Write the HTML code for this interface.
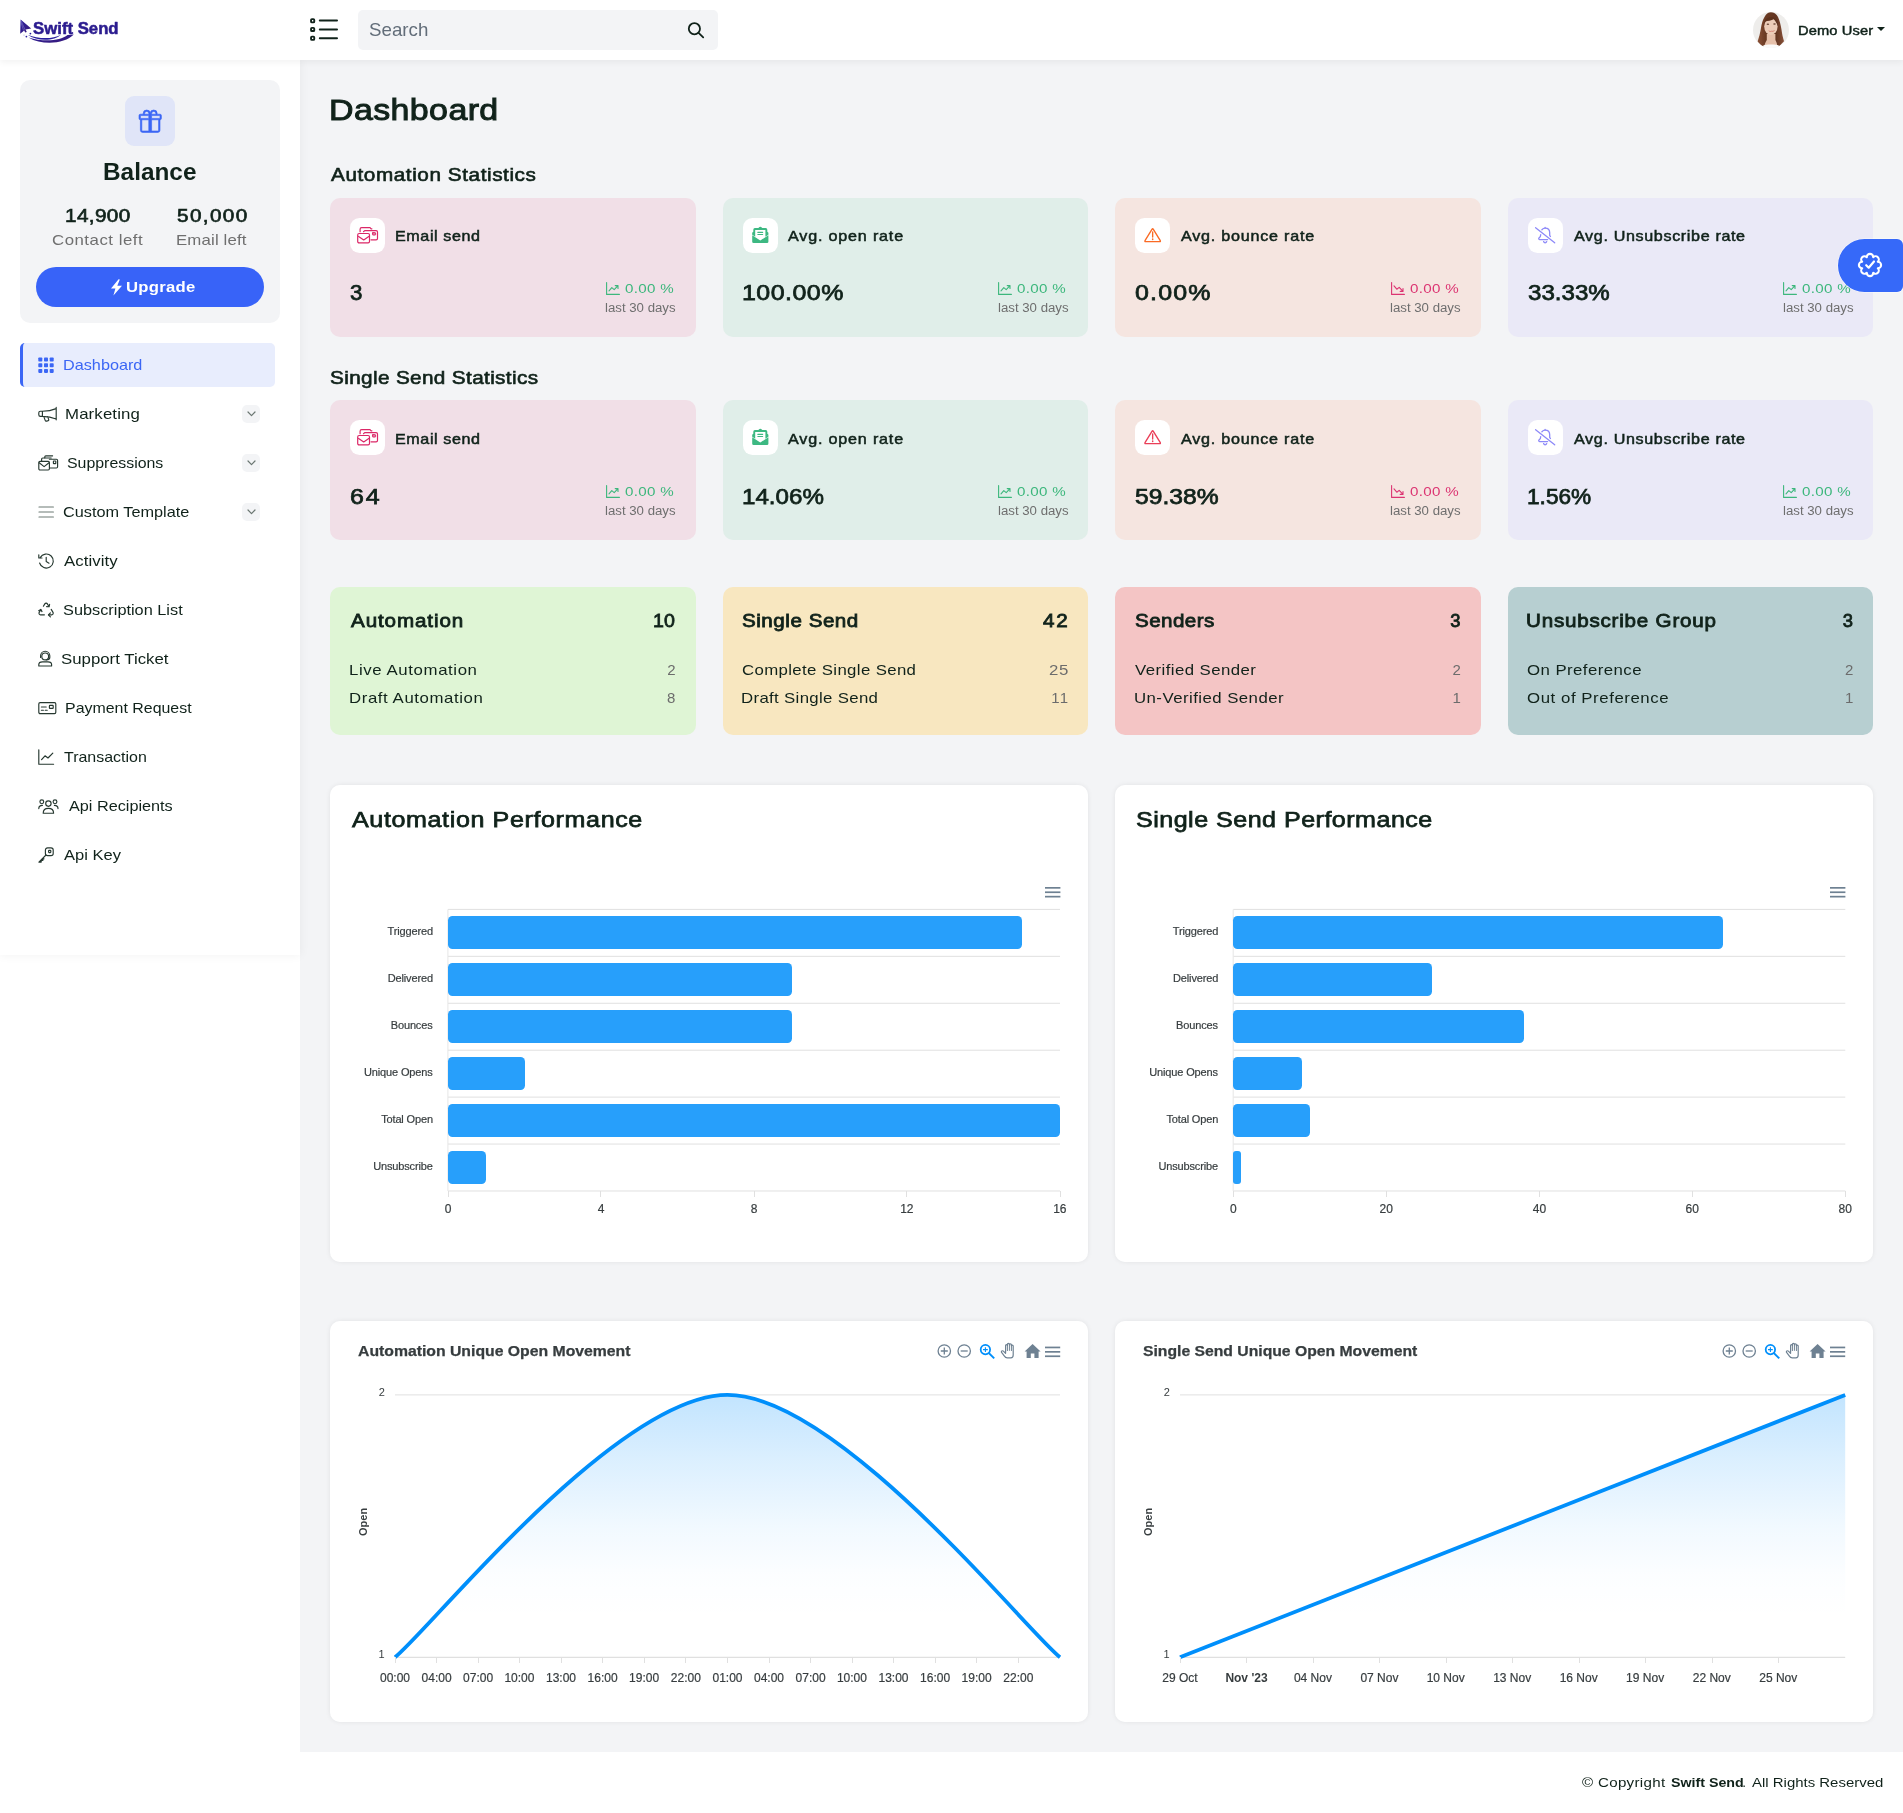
<!DOCTYPE html>
<html lang="en"><head><meta charset="utf-8"><title>Dashboard - Swift Send</title>
<style>
*{box-sizing:border-box;margin:0;padding:0}
html,body{width:1903px;height:1813px;overflow:hidden;background:#fff}
body{position:relative;font-family:"Liberation Sans",sans-serif;color:#10221a}
.t{position:absolute;white-space:nowrap;line-height:1;display:block}
.b{position:absolute}
svg{position:absolute;overflow:visible}
#pg{position:absolute;left:0;top:0;width:1903px;height:1813px;overflow:hidden;transform:translateZ(0)}
</style></head>
<body><div id="pg">
<!-- main background -->
<div class="b" style="left:300px;top:60px;width:1603px;height:1692px;background:rgba(243,244,246,.996);"></div>
<!-- content -->
<span class="t" style="left:328.88px;top:95px;font-size:30.3px;letter-spacing:0.36px;-webkit-text-stroke:1px #10221a;transform:scaleX(1.12);transform-origin:0 0;">Dashboard</span>
<span class="t" style="left:331.31px;top:166px;font-size:18.5px;letter-spacing:0.51px;-webkit-text-stroke:0.62px #10221a;transform:scaleX(1.12);transform-origin:0 0;">Automation Statistics</span>
<span class="t" style="left:329.91px;top:369px;font-size:18.5px;letter-spacing:0.323px;-webkit-text-stroke:0.62px #10221a;transform:scaleX(1.12);transform-origin:0 0;">Single Send Statistics</span>
<div class="b" style="left:330px;top:198px;width:366px;height:139px;background:rgba(241,223,231,.996);border-radius:10px;"></div>
<div class="b" style="left:350px;top:218px;width:35px;height:35px;background:rgba(255,255,255,.996);border-radius:9.5px;"></div>
<svg style="left:349.85px;top:217.7px" width="35" height="35" viewBox="0 0 35 35" fill="none" stroke="#db2767" stroke-width="1.2" stroke-linecap="round" stroke-linejoin="round"><rect x="7.7" y="15.5" width="11.8" height="9.4" rx="1.4"/><path d="M8.6 18.4L13.7 21.9L18.8 18.4"/><path d="M10.1 13.7V11.2C10.1 10.2 10.6 9.7 11.6 9.7H20.2L20.9 10.8H21.9"/><path d="M13.5 13.7L14.7 12.6H26.1C27 12.6 27.5 13.1 27.5 14.1V20.4C27.5 21.3 27 21.8 26.1 21.8H21"/><rect x="22.5" y="14.7" width="3.1" height="2.3" rx=".4" fill="#db2767" fill-opacity=".55" stroke-width="1"/></svg>
<span class="t" style="left:394.56px;top:229px;font-size:14.4px;letter-spacing:0.518px;-webkit-text-stroke:0.5px #10221a;transform:scaleX(1.12);transform-origin:0 0;">Email send</span>
<span class="t" style="left:349.93px;top:282px;font-size:22.3px;-webkit-text-stroke:0.75px #10221a;">3</span>
<svg style="left:605.5px;top:281.5px" width="14" height="13" viewBox="0 0 14 13" fill="none" stroke="#3cb77c" stroke-width="1.1" stroke-linecap="round" stroke-linejoin="round"><path d="M.6 .6V12.4H13.4"/><path d="M3 8.8L5.8 5.6L8.2 7.6L11.8 3.8M9.2 3.6H12V6.4"/></svg>
<span class="t" style="left:624.61px;top:282px;font-size:13.5px;letter-spacing:0.278px;color:#3cb77c;transform:scaleX(1.12);transform-origin:0 0;">0.00 %</span>
<span class="t" style="left:604.91px;top:302px;font-size:12px;color:#6e6e6e;transform:scaleX(1.102);transform-origin:0 0;">last 30 days</span>
<div class="b" style="left:723px;top:198px;width:365px;height:139px;background:rgba(224,238,233,.996);border-radius:10px;"></div>
<div class="b" style="left:743px;top:218px;width:35px;height:35px;background:rgba(255,255,255,.996);border-radius:9.5px;"></div>
<svg style="left:742.85px;top:217.7px" width="35" height="35" viewBox="-9.1 -8.7 35 35"><path d="M1.2 3Q1.2 1.4 2.8 1.4H6.2L7.4 .4Q8.2 -.2 9 .4L10.2 1.4H13.6Q15.2 1.4 15.2 3V5L16.1 5.7Q16.5 6.1 16.3 6.9V8L13.3 10V3.4H3.1V10L.1 8V6.9Q-.1 6.1 .3 5.7L1.2 5Z" fill="#3db882"/><rect x="5.2" y="5.1" width="5.9" height="1.1" rx=".5" fill="#3db882"/><rect x="5.2" y="7.2" width="5.9" height="1.1" rx=".5" fill="#3db882"/><path d="M.1 8.6L8.2 13.8L16.3 8.6V15Q16.3 16.4 14.9 16.4H1.5Q.1 16.4 .1 15Z" fill="#3db882"/></svg>
<span class="t" style="left:788.45px;top:229px;font-size:14.4px;letter-spacing:0.726px;-webkit-text-stroke:0.5px #10221a;transform:scaleX(1.12);transform-origin:0 0;">Avg. open rate</span>
<span class="t" style="left:741.52px;top:282px;font-size:22.3px;letter-spacing:0.424px;-webkit-text-stroke:0.75px #10221a;transform:scaleX(1.12);transform-origin:0 0;">100.00%</span>
<svg style="left:998.1px;top:281.5px" width="14" height="13" viewBox="0 0 14 13" fill="none" stroke="#3cb77c" stroke-width="1.1" stroke-linecap="round" stroke-linejoin="round"><path d="M.6 .6V12.4H13.4"/><path d="M3 8.8L5.8 5.6L8.2 7.6L11.8 3.8M9.2 3.6H12V6.4"/></svg>
<span class="t" style="left:1017.21px;top:282px;font-size:13.5px;letter-spacing:0.278px;color:#3cb77c;transform:scaleX(1.12);transform-origin:0 0;">0.00 %</span>
<span class="t" style="left:997.51px;top:302px;font-size:12px;color:#6e6e6e;transform:scaleX(1.102);transform-origin:0 0;">last 30 days</span>
<div class="b" style="left:1115px;top:198px;width:366px;height:139px;background:rgba(245,229,224,.996);border-radius:10px;"></div>
<div class="b" style="left:1135px;top:218px;width:35px;height:35px;background:rgba(255,255,255,.996);border-radius:9.5px;"></div>
<svg style="left:1134.85px;top:217.7px" width="35" height="35" viewBox="0 0 35 35" fill="none" stroke="#fa6a24" stroke-width="1.35" stroke-linecap="round" stroke-linejoin="round"><path d="M17.1 11.2Q17.66 10.3 18.2 11.2L25.3 22.7Q25.7 23.6 24.8 23.6H10.5Q9.6 23.6 10 22.7Z"/><path d="M17.66 14V19.1"/><path d="M17.66 20.9V21.5" stroke-width="1.5"/></svg>
<span class="t" style="left:1181.05px;top:229px;font-size:14.4px;letter-spacing:0.687px;-webkit-text-stroke:0.5px #10221a;transform:scaleX(1.12);transform-origin:0 0;">Avg. bounce rate</span>
<span class="t" style="left:1135.04px;top:282px;font-size:22.3px;letter-spacing:1.051px;-webkit-text-stroke:0.75px #10221a;transform:scaleX(1.12);transform-origin:0 0;">0.00%</span>
<svg style="left:1390.7px;top:281.5px" width="14" height="13" viewBox="0 0 14 13" fill="none" stroke="#dc3572" stroke-width="1.1" stroke-linecap="round" stroke-linejoin="round"><path d="M.6 .6V12.4H13.4"/><path d="M3 3.8L5.8 7.2L8.2 5.4L11.8 9.2M9.2 9.4H12V6.6"/></svg>
<span class="t" style="left:1409.81px;top:282px;font-size:13.5px;letter-spacing:0.278px;color:#dc3572;transform:scaleX(1.12);transform-origin:0 0;">0.00 %</span>
<span class="t" style="left:1390.11px;top:302px;font-size:12px;color:#6e6e6e;transform:scaleX(1.102);transform-origin:0 0;">last 30 days</span>
<div class="b" style="left:1508px;top:198px;width:365px;height:139px;background:rgba(234,233,247,.996);border-radius:10px;"></div>
<div class="b" style="left:1528px;top:218px;width:35px;height:35px;background:rgba(255,255,255,.996);border-radius:9.5px;"></div>
<svg style="left:1527.85px;top:217.7px" width="35" height="35" viewBox="0 0 35 35" fill="none" stroke="#8d89f8" stroke-width="1.3" stroke-linecap="round" stroke-linejoin="round"><path d="M7.6 9.7L26.7 24.8"/><path d="M13.9 11.7C14.8 10.7 15.9 10.2 17.1 10.2C19.8 10.2 21.7 12 21.7 14.8V17.4L22.4 18.5"/><path d="M17.1 10.1V9.5"/><path d="M12.7 16.7C12.7 18.3 12 19.2 11.2 19.8C10.4 20.5 10.6 21.6 11.6 21.6H19.6"/><path d="M15.6 23.6C15.9 24.4 16.5 24.8 17.1 24.8C17.8 24.8 18.4 24.4 18.7 23.6"/></svg>
<span class="t" style="left:1573.65px;top:229px;font-size:14.4px;letter-spacing:0.572px;-webkit-text-stroke:0.5px #10221a;transform:scaleX(1.12);transform-origin:0 0;">Avg. Unsubscribe rate</span>
<span class="t" style="left:1527.69px;top:282px;font-size:22.3px;-webkit-text-stroke:0.75px #10221a;transform:scaleX(1.0811);transform-origin:0 0;">33.33%</span>
<svg style="left:1783.3px;top:281.5px" width="14" height="13" viewBox="0 0 14 13" fill="none" stroke="#3cb77c" stroke-width="1.1" stroke-linecap="round" stroke-linejoin="round"><path d="M.6 .6V12.4H13.4"/><path d="M3 8.8L5.8 5.6L8.2 7.6L11.8 3.8M9.2 3.6H12V6.4"/></svg>
<span class="t" style="left:1802.41px;top:282px;font-size:13.5px;letter-spacing:0.278px;color:#3cb77c;transform:scaleX(1.12);transform-origin:0 0;">0.00 %</span>
<span class="t" style="left:1782.71px;top:302px;font-size:12px;color:#6e6e6e;transform:scaleX(1.102);transform-origin:0 0;">last 30 days</span>
<div class="b" style="left:330px;top:400px;width:366px;height:140px;background:rgba(241,223,231,.996);border-radius:10px;"></div>
<div class="b" style="left:350px;top:420px;width:35px;height:35px;background:rgba(255,255,255,.996);border-radius:9.5px;"></div>
<svg style="left:349.85px;top:419.7px" width="35" height="35" viewBox="0 0 35 35" fill="none" stroke="#db2767" stroke-width="1.2" stroke-linecap="round" stroke-linejoin="round"><rect x="7.7" y="15.5" width="11.8" height="9.4" rx="1.4"/><path d="M8.6 18.4L13.7 21.9L18.8 18.4"/><path d="M10.1 13.7V11.2C10.1 10.2 10.6 9.7 11.6 9.7H20.2L20.9 10.8H21.9"/><path d="M13.5 13.7L14.7 12.6H26.1C27 12.6 27.5 13.1 27.5 14.1V20.4C27.5 21.3 27 21.8 26.1 21.8H21"/><rect x="22.5" y="14.7" width="3.1" height="2.3" rx=".4" fill="#db2767" fill-opacity=".55" stroke-width="1"/></svg>
<span class="t" style="left:394.56px;top:432px;font-size:14.4px;letter-spacing:0.518px;-webkit-text-stroke:0.5px #10221a;transform:scaleX(1.12);transform-origin:0 0;">Email send</span>
<span class="t" style="left:349.55px;top:486px;font-size:22.3px;letter-spacing:1.677px;-webkit-text-stroke:0.75px #10221a;transform:scaleX(1.12);transform-origin:0 0;">64</span>
<svg style="left:605.5px;top:484.5px" width="14" height="13" viewBox="0 0 14 13" fill="none" stroke="#3cb77c" stroke-width="1.1" stroke-linecap="round" stroke-linejoin="round"><path d="M.6 .6V12.4H13.4"/><path d="M3 8.8L5.8 5.6L8.2 7.6L11.8 3.8M9.2 3.6H12V6.4"/></svg>
<span class="t" style="left:624.61px;top:485px;font-size:13.5px;letter-spacing:0.278px;color:#3cb77c;transform:scaleX(1.12);transform-origin:0 0;">0.00 %</span>
<span class="t" style="left:604.91px;top:505px;font-size:12px;color:#6e6e6e;transform:scaleX(1.102);transform-origin:0 0;">last 30 days</span>
<div class="b" style="left:723px;top:400px;width:365px;height:140px;background:rgba(224,238,233,.996);border-radius:10px;"></div>
<div class="b" style="left:743px;top:420px;width:35px;height:35px;background:rgba(255,255,255,.996);border-radius:9.5px;"></div>
<svg style="left:742.85px;top:419.7px" width="35" height="35" viewBox="-9.1 -8.7 35 35"><path d="M1.2 3Q1.2 1.4 2.8 1.4H6.2L7.4 .4Q8.2 -.2 9 .4L10.2 1.4H13.6Q15.2 1.4 15.2 3V5L16.1 5.7Q16.5 6.1 16.3 6.9V8L13.3 10V3.4H3.1V10L.1 8V6.9Q-.1 6.1 .3 5.7L1.2 5Z" fill="#3db882"/><rect x="5.2" y="5.1" width="5.9" height="1.1" rx=".5" fill="#3db882"/><rect x="5.2" y="7.2" width="5.9" height="1.1" rx=".5" fill="#3db882"/><path d="M.1 8.6L8.2 13.8L16.3 8.6V15Q16.3 16.4 14.9 16.4H1.5Q.1 16.4 .1 15Z" fill="#3db882"/></svg>
<span class="t" style="left:788.45px;top:432px;font-size:14.4px;letter-spacing:0.726px;-webkit-text-stroke:0.5px #10221a;transform:scaleX(1.12);transform-origin:0 0;">Avg. open rate</span>
<span class="t" style="left:741.57px;top:486px;font-size:22.3px;-webkit-text-stroke:0.75px #10221a;transform:scaleX(1.0827);transform-origin:0 0;">14.06%</span>
<svg style="left:998.1px;top:484.5px" width="14" height="13" viewBox="0 0 14 13" fill="none" stroke="#3cb77c" stroke-width="1.1" stroke-linecap="round" stroke-linejoin="round"><path d="M.6 .6V12.4H13.4"/><path d="M3 8.8L5.8 5.6L8.2 7.6L11.8 3.8M9.2 3.6H12V6.4"/></svg>
<span class="t" style="left:1017.21px;top:485px;font-size:13.5px;letter-spacing:0.278px;color:#3cb77c;transform:scaleX(1.12);transform-origin:0 0;">0.00 %</span>
<span class="t" style="left:997.51px;top:505px;font-size:12px;color:#6e6e6e;transform:scaleX(1.102);transform-origin:0 0;">last 30 days</span>
<div class="b" style="left:1115px;top:400px;width:366px;height:140px;background:rgba(245,229,224,.996);border-radius:10px;"></div>
<div class="b" style="left:1135px;top:420px;width:35px;height:35px;background:rgba(255,255,255,.996);border-radius:9.5px;"></div>
<svg style="left:1134.85px;top:419.7px" width="35" height="35" viewBox="0 0 35 35" fill="none" stroke="#ea3f58" stroke-width="1.35" stroke-linecap="round" stroke-linejoin="round"><path d="M17.1 11.2Q17.66 10.3 18.2 11.2L25.3 22.7Q25.7 23.6 24.8 23.6H10.5Q9.6 23.6 10 22.7Z"/><path d="M17.66 14V19.1"/><path d="M17.66 20.9V21.5" stroke-width="1.5"/></svg>
<span class="t" style="left:1181.05px;top:432px;font-size:14.4px;letter-spacing:0.687px;-webkit-text-stroke:0.5px #10221a;transform:scaleX(1.12);transform-origin:0 0;">Avg. bounce rate</span>
<span class="t" style="left:1135.03px;top:486px;font-size:22.3px;-webkit-text-stroke:0.75px #10221a;transform:scaleX(1.1045);transform-origin:0 0;">59.38%</span>
<svg style="left:1390.7px;top:484.5px" width="14" height="13" viewBox="0 0 14 13" fill="none" stroke="#dc3572" stroke-width="1.1" stroke-linecap="round" stroke-linejoin="round"><path d="M.6 .6V12.4H13.4"/><path d="M3 3.8L5.8 7.2L8.2 5.4L11.8 9.2M9.2 9.4H12V6.6"/></svg>
<span class="t" style="left:1409.81px;top:485px;font-size:13.5px;letter-spacing:0.278px;color:#dc3572;transform:scaleX(1.12);transform-origin:0 0;">0.00 %</span>
<span class="t" style="left:1390.11px;top:505px;font-size:12px;color:#6e6e6e;transform:scaleX(1.102);transform-origin:0 0;">last 30 days</span>
<div class="b" style="left:1508px;top:400px;width:365px;height:140px;background:rgba(234,233,247,.996);border-radius:10px;"></div>
<div class="b" style="left:1528px;top:420px;width:35px;height:35px;background:rgba(255,255,255,.996);border-radius:9.5px;"></div>
<svg style="left:1527.85px;top:419.7px" width="35" height="35" viewBox="0 0 35 35" fill="none" stroke="#8d89f8" stroke-width="1.3" stroke-linecap="round" stroke-linejoin="round"><path d="M7.6 9.7L26.7 24.8"/><path d="M13.9 11.7C14.8 10.7 15.9 10.2 17.1 10.2C19.8 10.2 21.7 12 21.7 14.8V17.4L22.4 18.5"/><path d="M17.1 10.1V9.5"/><path d="M12.7 16.7C12.7 18.3 12 19.2 11.2 19.8C10.4 20.5 10.6 21.6 11.6 21.6H19.6"/><path d="M15.6 23.6C15.9 24.4 16.5 24.8 17.1 24.8C17.8 24.8 18.4 24.4 18.7 23.6"/></svg>
<span class="t" style="left:1573.65px;top:432px;font-size:14.4px;letter-spacing:0.572px;-webkit-text-stroke:0.5px #10221a;transform:scaleX(1.12);transform-origin:0 0;">Avg. Unsubscribe rate</span>
<span class="t" style="left:1526.85px;top:486px;font-size:22.3px;-webkit-text-stroke:0.75px #10221a;transform:scaleX(1.0165);transform-origin:0 0;">1.56%</span>
<svg style="left:1783.3px;top:484.5px" width="14" height="13" viewBox="0 0 14 13" fill="none" stroke="#3cb77c" stroke-width="1.1" stroke-linecap="round" stroke-linejoin="round"><path d="M.6 .6V12.4H13.4"/><path d="M3 8.8L5.8 5.6L8.2 7.6L11.8 3.8M9.2 3.6H12V6.4"/></svg>
<span class="t" style="left:1802.41px;top:485px;font-size:13.5px;letter-spacing:0.278px;color:#3cb77c;transform:scaleX(1.12);transform-origin:0 0;">0.00 %</span>
<span class="t" style="left:1782.71px;top:505px;font-size:12px;color:#6e6e6e;transform:scaleX(1.102);transform-origin:0 0;">last 30 days</span>
<div class="b" style="left:330px;top:587px;width:366px;height:148px;background:rgba(223,245,213,.996);border-radius:10px;"></div>
<span class="t" style="left:351.41px;top:612px;font-size:18.4px;letter-spacing:0.797px;-webkit-text-stroke:0.8px #10221a;transform:scaleX(1.12);transform-origin:0 0;">Automation</span>
<span class="t" style="left:653.33px;top:612px;font-size:18.4px;-webkit-text-stroke:0.8px #10221a;transform:scaleX(1.0655);transform-origin:0 0;">10</span>
<span class="t" style="left:349.12px;top:662px;font-size:15px;letter-spacing:0.537px;transform:scaleX(1.12);transform-origin:0 0;">Live Automation</span>
<span class="t" style="left:667.21px;top:662px;font-size:15px;color:#6c6c6c;">2</span>
<span class="t" style="left:349.12px;top:690px;font-size:15px;letter-spacing:0.514px;transform:scaleX(1.12);transform-origin:0 0;">Draft Automation</span>
<span class="t" style="left:667.11px;top:690px;font-size:15px;color:#6c6c6c;">8</span>
<div class="b" style="left:723px;top:587px;width:365px;height:148px;background:rgba(248,231,192,.996);border-radius:10px;"></div>
<span class="t" style="left:742.11px;top:612px;font-size:18.4px;letter-spacing:0.466px;-webkit-text-stroke:0.8px #10221a;transform:scaleX(1.12);transform-origin:0 0;">Single Send</span>
<span class="t" style="left:1043.38px;top:612px;font-size:18.4px;letter-spacing:1.509px;-webkit-text-stroke:0.8px #10221a;transform:scaleX(1.12);transform-origin:0 0;">42</span>
<span class="t" style="left:741.95px;top:662px;font-size:15px;letter-spacing:0.318px;transform:scaleX(1.12);transform-origin:0 0;">Complete Single Send</span>
<span class="t" style="left:1048.76px;top:662px;font-size:15px;letter-spacing:0.592px;color:#6c6c6c;transform:scaleX(1.12);transform-origin:0 0;">25</span>
<span class="t" style="left:741.42px;top:690px;font-size:15px;letter-spacing:0.295px;transform:scaleX(1.12);transform-origin:0 0;">Draft Single Send</span>
<span class="t" style="left:1051.16px;top:690px;font-size:15px;letter-spacing:1.4px;color:#6c6c6c;">11</span>
<div class="b" style="left:1115px;top:587px;width:366px;height:148px;background:rgba(244,197,197,.996);border-radius:10px;"></div>
<span class="t" style="left:1134.51px;top:612px;font-size:18.4px;letter-spacing:0.376px;-webkit-text-stroke:0.8px #10221a;transform:scaleX(1.12);transform-origin:0 0;">Senders</span>
<span class="t" style="left:1450.18px;top:612px;font-size:18.4px;-webkit-text-stroke:0.8px #10221a;">3</span>
<span class="t" style="left:1135.13px;top:662px;font-size:15px;letter-spacing:0.381px;transform:scaleX(1.12);transform-origin:0 0;">Verified Sender</span>
<span class="t" style="left:1452.41px;top:662px;font-size:15px;color:#6c6c6c;">2</span>
<span class="t" style="left:1133.9px;top:690px;font-size:15px;letter-spacing:0.4px;transform:scaleX(1.12);transform-origin:0 0;">Un-Verified Sender</span>
<span class="t" style="left:1452.39px;top:690px;font-size:15px;color:#6c6c6c;">1</span>
<div class="b" style="left:1508px;top:587px;width:365px;height:148px;background:rgba(183,207,209,.996);border-radius:10px;"></div>
<span class="t" style="left:1526.26px;top:612px;font-size:18.4px;letter-spacing:0.698px;-webkit-text-stroke:0.8px #10221a;transform:scaleX(1.12);transform-origin:0 0;">Unsubscribe Group</span>
<span class="t" style="left:1842.78px;top:612px;font-size:18.4px;-webkit-text-stroke:0.8px #10221a;">3</span>
<span class="t" style="left:1526.6px;top:662px;font-size:15px;letter-spacing:0.393px;transform:scaleX(1.12);transform-origin:0 0;">On Preference</span>
<span class="t" style="left:1845.01px;top:662px;font-size:15px;color:#6c6c6c;">2</span>
<span class="t" style="left:1526.6px;top:690px;font-size:15px;letter-spacing:0.499px;transform:scaleX(1.12);transform-origin:0 0;">Out of Preference</span>
<span class="t" style="left:1844.99px;top:690px;font-size:15px;color:#6c6c6c;">1</span>
<div class="b" style="left:330px;top:785px;width:758px;height:477px;background:rgba(255,255,255,.996);border-radius:10px;box-shadow:0 0 5px rgba(0,0,0,.075);"></div>
<span class="t" style="left:351.87px;top:809px;font-size:22.4px;letter-spacing:0.549px;-webkit-text-stroke:0.75px #10221a;transform:scaleX(1.12);transform-origin:0 0;">Automation Performance</span>
<svg style="left:0;top:0" width="1903" height="1813" viewBox="0 0 1903 1813" fill="none"><path d="M448 909.4H1060M448 956.33H1060M448 1003.26H1060M448 1050.19H1060M448 1097.12H1060M448 1144.05H1060M448 1190.98H1060" stroke="#e0e0e0" stroke-width="1"/><path d="M447.9 909.4V1190.98" stroke="#e6e6e6" stroke-width="1"/></svg>
<div class="b" style="left:448px;top:916.439px;width:573.75px;height:32.851px;background:rgba(38,159,251,.996);border-radius:4.5px;"></div>
<span class="t" style="left:387.54px;top:926px;font-size:11px;letter-spacing:-0.15px;color:#373d3f;-webkit-text-stroke:0.2px #373d3f;">Triggered</span>
<div class="b" style="left:448px;top:963.369px;width:344.25px;height:32.851px;background:rgba(38,159,251,.996);border-radius:4.5px;"></div>
<span class="t" style="left:387.74px;top:973px;font-size:11px;letter-spacing:-0.15px;color:#373d3f;-webkit-text-stroke:0.2px #373d3f;">Delivered</span>
<div class="b" style="left:448px;top:1010.3px;width:344.25px;height:32.851px;background:rgba(38,159,251,.996);border-radius:4.5px;"></div>
<span class="t" style="left:390.79px;top:1020px;font-size:11px;letter-spacing:-0.15px;color:#373d3f;-webkit-text-stroke:0.2px #373d3f;">Bounces</span>
<div class="b" style="left:448px;top:1057.23px;width:76.5px;height:32.851px;background:rgba(38,159,251,.996);border-radius:4.5px;"></div>
<span class="t" style="left:364.02px;top:1067px;font-size:11px;letter-spacing:-0.15px;color:#373d3f;-webkit-text-stroke:0.2px #373d3f;">Unique Opens</span>
<div class="b" style="left:448px;top:1104.16px;width:612px;height:32.851px;background:rgba(38,159,251,.996);border-radius:4.5px;"></div>
<span class="t" style="left:381.16px;top:1114px;font-size:11px;letter-spacing:-0.15px;color:#373d3f;-webkit-text-stroke:0.2px #373d3f;">Total Open</span>
<div class="b" style="left:448px;top:1151.09px;width:38.25px;height:32.851px;background:rgba(38,159,251,.996);border-radius:4.5px;"></div>
<span class="t" style="left:373.15px;top:1161px;font-size:11px;letter-spacing:-0.15px;color:#373d3f;-webkit-text-stroke:0.2px #373d3f;">Unsubscribe</span>
<div class="b" style="left:448px;top:1191px;width:1px;height:6px;background:rgba(224,224,224,.996);"></div>
<span class="t" style="left:444.66px;top:1203px;font-size:12px;color:#373d3f;-webkit-text-stroke:0.2px #373d3f;">0</span>
<div class="b" style="left:600px;top:1191px;width:1px;height:6px;background:rgba(224,224,224,.996);"></div>
<span class="t" style="left:597.7px;top:1203px;font-size:12px;color:#373d3f;-webkit-text-stroke:0.2px #373d3f;">4</span>
<div class="b" style="left:754px;top:1191px;width:1px;height:6px;background:rgba(224,224,224,.996);"></div>
<span class="t" style="left:750.66px;top:1203px;font-size:12px;color:#373d3f;-webkit-text-stroke:0.2px #373d3f;">8</span>
<div class="b" style="left:906px;top:1191px;width:1px;height:6px;background:rgba(224,224,224,.996);"></div>
<span class="t" style="left:900.17px;top:1203px;font-size:12px;color:#373d3f;-webkit-text-stroke:0.2px #373d3f;">12</span>
<div class="b" style="left:1060px;top:1191px;width:1px;height:6px;background:rgba(224,224,224,.996);"></div>
<span class="t" style="left:1053.13px;top:1203px;font-size:12px;color:#373d3f;-webkit-text-stroke:0.2px #373d3f;">16</span>
<svg style="left:1044.7px;top:886.8px" width="16" height="11" viewBox="0 0 16 11" fill="#6e8192"><rect x="0" y="0" width="15.4" height="1.7"/><rect x="0" y="4.4" width="15.4" height="1.7"/><rect x="0" y="8.8" width="15.4" height="1.7"/></svg>
<div class="b" style="left:1115px;top:785px;width:758px;height:477px;background:rgba(255,255,255,.996);border-radius:10px;box-shadow:0 0 5px rgba(0,0,0,.075);"></div>
<span class="t" style="left:1136.08px;top:809px;font-size:22.4px;letter-spacing:0.427px;-webkit-text-stroke:0.75px #10221a;transform:scaleX(1.12);transform-origin:0 0;">Single Send Performance</span>
<svg style="left:0;top:0" width="1903" height="1813" viewBox="0 0 1903 1813" fill="none"><path d="M1233.3 909.4H1845.3M1233.3 956.33H1845.3M1233.3 1003.26H1845.3M1233.3 1050.19H1845.3M1233.3 1097.12H1845.3M1233.3 1144.05H1845.3M1233.3 1190.98H1845.3" stroke="#e0e0e0" stroke-width="1"/><path d="M1233.2 909.4V1190.98" stroke="#e6e6e6" stroke-width="1"/></svg>
<div class="b" style="left:1233.3px;top:916.439px;width:489.6px;height:32.851px;background:rgba(38,159,251,.996);border-radius:4.5px;"></div>
<span class="t" style="left:1172.84px;top:926px;font-size:11px;letter-spacing:-0.15px;color:#373d3f;-webkit-text-stroke:0.2px #373d3f;">Triggered</span>
<div class="b" style="left:1233.3px;top:963.369px;width:198.9px;height:32.851px;background:rgba(38,159,251,.996);border-radius:4.5px;"></div>
<span class="t" style="left:1173.04px;top:973px;font-size:11px;letter-spacing:-0.15px;color:#373d3f;-webkit-text-stroke:0.2px #373d3f;">Delivered</span>
<div class="b" style="left:1233.3px;top:1010.3px;width:290.7px;height:32.851px;background:rgba(38,159,251,.996);border-radius:4.5px;"></div>
<span class="t" style="left:1176.09px;top:1020px;font-size:11px;letter-spacing:-0.15px;color:#373d3f;-webkit-text-stroke:0.2px #373d3f;">Bounces</span>
<div class="b" style="left:1233.3px;top:1057.23px;width:68.85px;height:32.851px;background:rgba(38,159,251,.996);border-radius:4.5px;"></div>
<span class="t" style="left:1149.32px;top:1067px;font-size:11px;letter-spacing:-0.15px;color:#373d3f;-webkit-text-stroke:0.2px #373d3f;">Unique Opens</span>
<div class="b" style="left:1233.3px;top:1104.16px;width:76.5px;height:32.851px;background:rgba(38,159,251,.996);border-radius:4.5px;"></div>
<span class="t" style="left:1166.46px;top:1114px;font-size:11px;letter-spacing:-0.15px;color:#373d3f;-webkit-text-stroke:0.2px #373d3f;">Total Open</span>
<div class="b" style="left:1233.3px;top:1151.09px;width:7.65px;height:32.851px;background:rgba(38,159,251,.996);border-radius:3px;"></div>
<span class="t" style="left:1158.45px;top:1161px;font-size:11px;letter-spacing:-0.15px;color:#373d3f;-webkit-text-stroke:0.2px #373d3f;">Unsubscribe</span>
<div class="b" style="left:1233px;top:1191px;width:1px;height:6px;background:rgba(224,224,224,.996);"></div>
<span class="t" style="left:1229.96px;top:1203px;font-size:12px;color:#373d3f;-webkit-text-stroke:0.2px #373d3f;">0</span>
<div class="b" style="left:1386px;top:1191px;width:1px;height:6px;background:rgba(224,224,224,.996);"></div>
<span class="t" style="left:1379.56px;top:1203px;font-size:12px;color:#373d3f;-webkit-text-stroke:0.2px #373d3f;">20</span>
<div class="b" style="left:1539px;top:1191px;width:1px;height:6px;background:rgba(224,224,224,.996);"></div>
<span class="t" style="left:1532.72px;top:1203px;font-size:12px;color:#373d3f;-webkit-text-stroke:0.2px #373d3f;">40</span>
<div class="b" style="left:1692px;top:1191px;width:1px;height:6px;background:rgba(224,224,224,.996);"></div>
<span class="t" style="left:1685.56px;top:1203px;font-size:12px;color:#373d3f;-webkit-text-stroke:0.2px #373d3f;">60</span>
<div class="b" style="left:1845px;top:1191px;width:1px;height:6px;background:rgba(224,224,224,.996);"></div>
<span class="t" style="left:1838.6px;top:1203px;font-size:12px;color:#373d3f;-webkit-text-stroke:0.2px #373d3f;">80</span>
<svg style="left:1830px;top:886.8px" width="16" height="11" viewBox="0 0 16 11" fill="#6e8192"><rect x="0" y="0" width="15.4" height="1.7"/><rect x="0" y="4.4" width="15.4" height="1.7"/><rect x="0" y="8.8" width="15.4" height="1.7"/></svg>
<div class="b" style="left:330px;top:1321px;width:758px;height:401px;background:rgba(255,255,255,.996);border-radius:10px;box-shadow:0 0 5px rgba(0,0,0,.075);"></div>
<span class="t" style="left:357.85px;top:1344px;font-size:14px;font-weight:700;color:#373d3f;-webkit-text-stroke:0.25px #373d3f;transform:scaleX(1.1265);transform-origin:0 0;">Automation Unique Open Movement</span>
<svg style="left:935px;top:1340px" width="130" height="24" viewBox="935 1340 130 24"><g fill="none" stroke="#6e8192" stroke-width="1.3"><circle cx="944.3" cy="1351" r="6.2"/><path d="M940.8 1351H947.8M944.3 1347.5V1354.5"/><circle cx="964.2" cy="1351" r="6.2"/><path d="M960.7 1351H967.7"/></g><g fill="none" stroke="#008ffb"><circle cx="985.4" cy="1349.6" r="4.7" stroke-width="1.8"/><path d="M988.9 1353.1L994.2 1358.4" stroke-width="2"/><path d="M983 1349.6H987.8M985.4 1347.2V1352" stroke-width="1.1"/></g><g fill="none" stroke="#6e8192" stroke-width="1.2" stroke-linejoin="round" stroke-linecap="round"><path d="M1005.6 1352.4V1345.6C1005.6 1344.4 1007.4 1344.4 1007.4 1345.6V1344.2C1007.4 1343 1009.4 1343 1009.4 1344.2V1344.8C1009.4 1343.6 1011.4 1343.6 1011.4 1344.8V1345.8C1011.4 1344.8 1013.2 1344.8 1013.2 1346V1355C1013.2 1357 1012.2 1357.8 1010.8 1357.8H1007.2C1005.8 1357.8 1005 1357 1004.2 1355.8L1001.6 1352.4C1000.8 1351.2 1002.4 1350.2 1003.4 1351.2L1005.6 1353.4"/><path d="M1007.4 1345.6V1350.6M1009.4 1344.6V1350.4M1011.4 1345.4V1350.6" stroke-width="1"/></g><path d="M1032.6 1344.1L1040.6 1351.4H1038.6V1357.9H1034.4V1353.4H1030.8V1357.9H1026.6V1351.4H1024.6Z" fill="#6e8192"/><g fill="#6e8192"><rect x="1045" y="1346.6" width="15.2" height="1.7"/><rect x="1045" y="1351" width="15.2" height="1.7"/><rect x="1045" y="1355.4" width="15.2" height="1.7"/></g></svg>
<svg style="left:0;top:0" width="1903" height="1813" viewBox="0 0 1903 1813" fill="none"><path d="M395 1394.9H1060" stroke="#e0e0e0" stroke-width="1"/><path d="M395 1657.4H1060" stroke="#e0e0e0" stroke-width="1.3"/></svg>
<svg style="left:0;top:0" width="1903" height="1813" viewBox="0 0 1903 1813"><defs><linearGradient id="ga" x1="0" y1="1394.9" x2="0" y2="1657.2" gradientUnits="userSpaceOnUse"><stop offset="0" stop-color="#008ffb" stop-opacity=".24"/><stop offset=".25" stop-color="#008ffb" stop-opacity=".14"/><stop offset=".5" stop-color="#008ffb" stop-opacity=".055"/><stop offset=".68" stop-color="#008ffb" stop-opacity=".014"/><stop offset=".85" stop-color="#008ffb" stop-opacity="0"/></linearGradient></defs><path d="M395 1657.2 C429.159 1630.25 616.667 1394.9 727.5 1394.9 C838.333 1394.9 1025.84 1630.25 1060 1657.2 Z" fill="url(#ga)"/><path d="M395 1657.2 C429.159 1630.25 616.667 1394.9 727.5 1394.9 C838.333 1394.9 1025.84 1630.25 1060 1657.2" fill="none" stroke="#008ffb" stroke-width="3.8" stroke-linecap="butt"/></svg>
<span class="t" style="left:378.64px;top:1387px;font-size:11px;color:#373d3f;">2</span>
<span class="t" style="left:378.49px;top:1649px;font-size:11px;color:#373d3f;">1</span>
<span class="t" style="left:358.2px;top:1535.8px;font-size:11px;font-weight:700;color:#373d3f;transform:rotate(-90deg);transform-origin:0 0">Open</span>
<div class="b" style="left:394.5px;top:1657.2px;width:1px;height:6px;background:rgba(224,224,224,.996);"></div>
<span class="t" style="left:379.99px;top:1672px;font-size:12px;color:#373d3f;-webkit-text-stroke:0.2px #373d3f;">00:00</span>
<div class="b" style="left:436.06px;top:1657.2px;width:1px;height:6px;background:rgba(224,224,224,.996);"></div>
<span class="t" style="left:421.55px;top:1672px;font-size:12px;color:#373d3f;-webkit-text-stroke:0.2px #373d3f;">04:00</span>
<div class="b" style="left:477.62px;top:1657.2px;width:1px;height:6px;background:rgba(224,224,224,.996);"></div>
<span class="t" style="left:463.11px;top:1672px;font-size:12px;color:#373d3f;-webkit-text-stroke:0.2px #373d3f;">07:00</span>
<div class="b" style="left:519.18px;top:1657.2px;width:1px;height:6px;background:rgba(224,224,224,.996);"></div>
<span class="t" style="left:504.44px;top:1672px;font-size:12px;color:#373d3f;-webkit-text-stroke:0.2px #373d3f;">10:00</span>
<div class="b" style="left:560.74px;top:1657.2px;width:1px;height:6px;background:rgba(224,224,224,.996);"></div>
<span class="t" style="left:546px;top:1672px;font-size:12px;color:#373d3f;-webkit-text-stroke:0.2px #373d3f;">13:00</span>
<div class="b" style="left:602.3px;top:1657.2px;width:1px;height:6px;background:rgba(224,224,224,.996);"></div>
<span class="t" style="left:587.56px;top:1672px;font-size:12px;color:#373d3f;-webkit-text-stroke:0.2px #373d3f;">16:00</span>
<div class="b" style="left:643.86px;top:1657.2px;width:1px;height:6px;background:rgba(224,224,224,.996);"></div>
<span class="t" style="left:629.12px;top:1672px;font-size:12px;color:#373d3f;-webkit-text-stroke:0.2px #373d3f;">19:00</span>
<div class="b" style="left:685.42px;top:1657.2px;width:1px;height:6px;background:rgba(224,224,224,.996);"></div>
<span class="t" style="left:670.84px;top:1672px;font-size:12px;color:#373d3f;-webkit-text-stroke:0.2px #373d3f;">22:00</span>
<div class="b" style="left:726.98px;top:1657.2px;width:1px;height:6px;background:rgba(224,224,224,.996);"></div>
<span class="t" style="left:712.47px;top:1672px;font-size:12px;color:#373d3f;-webkit-text-stroke:0.2px #373d3f;">01:00</span>
<div class="b" style="left:768.54px;top:1657.2px;width:1px;height:6px;background:rgba(224,224,224,.996);"></div>
<span class="t" style="left:754.02px;top:1672px;font-size:12px;color:#373d3f;-webkit-text-stroke:0.2px #373d3f;">04:00</span>
<div class="b" style="left:810.1px;top:1657.2px;width:1px;height:6px;background:rgba(224,224,224,.996);"></div>
<span class="t" style="left:795.59px;top:1672px;font-size:12px;color:#373d3f;-webkit-text-stroke:0.2px #373d3f;">07:00</span>
<div class="b" style="left:851.66px;top:1657.2px;width:1px;height:6px;background:rgba(224,224,224,.996);"></div>
<span class="t" style="left:836.92px;top:1672px;font-size:12px;color:#373d3f;-webkit-text-stroke:0.2px #373d3f;">10:00</span>
<div class="b" style="left:893.22px;top:1657.2px;width:1px;height:6px;background:rgba(224,224,224,.996);"></div>
<span class="t" style="left:878.48px;top:1672px;font-size:12px;color:#373d3f;-webkit-text-stroke:0.2px #373d3f;">13:00</span>
<div class="b" style="left:934.78px;top:1657.2px;width:1px;height:6px;background:rgba(224,224,224,.996);"></div>
<span class="t" style="left:920.04px;top:1672px;font-size:12px;color:#373d3f;-webkit-text-stroke:0.2px #373d3f;">16:00</span>
<div class="b" style="left:976.34px;top:1657.2px;width:1px;height:6px;background:rgba(224,224,224,.996);"></div>
<span class="t" style="left:961.6px;top:1672px;font-size:12px;color:#373d3f;-webkit-text-stroke:0.2px #373d3f;">19:00</span>
<div class="b" style="left:1017.9px;top:1657.2px;width:1px;height:6px;background:rgba(224,224,224,.996);"></div>
<span class="t" style="left:1003.32px;top:1672px;font-size:12px;color:#373d3f;-webkit-text-stroke:0.2px #373d3f;">22:00</span>
<div class="b" style="left:1115px;top:1321px;width:758px;height:401px;background:rgba(255,255,255,.996);border-radius:10px;box-shadow:0 0 5px rgba(0,0,0,.075);"></div>
<span class="t" style="left:1142.69px;top:1344px;font-size:14px;font-weight:700;color:#373d3f;-webkit-text-stroke:0.25px #373d3f;transform:scaleX(1.1229);transform-origin:0 0;">Single Send Unique Open Movement</span>
<svg style="left:1720.3px;top:1340px" width="130" height="24" viewBox="935 1340 130 24"><g fill="none" stroke="#6e8192" stroke-width="1.3"><circle cx="944.3" cy="1351" r="6.2"/><path d="M940.8 1351H947.8M944.3 1347.5V1354.5"/><circle cx="964.2" cy="1351" r="6.2"/><path d="M960.7 1351H967.7"/></g><g fill="none" stroke="#008ffb"><circle cx="985.4" cy="1349.6" r="4.7" stroke-width="1.8"/><path d="M988.9 1353.1L994.2 1358.4" stroke-width="2"/><path d="M983 1349.6H987.8M985.4 1347.2V1352" stroke-width="1.1"/></g><g fill="none" stroke="#6e8192" stroke-width="1.2" stroke-linejoin="round" stroke-linecap="round"><path d="M1005.6 1352.4V1345.6C1005.6 1344.4 1007.4 1344.4 1007.4 1345.6V1344.2C1007.4 1343 1009.4 1343 1009.4 1344.2V1344.8C1009.4 1343.6 1011.4 1343.6 1011.4 1344.8V1345.8C1011.4 1344.8 1013.2 1344.8 1013.2 1346V1355C1013.2 1357 1012.2 1357.8 1010.8 1357.8H1007.2C1005.8 1357.8 1005 1357 1004.2 1355.8L1001.6 1352.4C1000.8 1351.2 1002.4 1350.2 1003.4 1351.2L1005.6 1353.4"/><path d="M1007.4 1345.6V1350.6M1009.4 1344.6V1350.4M1011.4 1345.4V1350.6" stroke-width="1"/></g><path d="M1032.6 1344.1L1040.6 1351.4H1038.6V1357.9H1034.4V1353.4H1030.8V1357.9H1026.6V1351.4H1024.6Z" fill="#6e8192"/><g fill="#6e8192"><rect x="1045" y="1346.6" width="15.2" height="1.7"/><rect x="1045" y="1351" width="15.2" height="1.7"/><rect x="1045" y="1355.4" width="15.2" height="1.7"/></g></svg>
<svg style="left:0;top:0" width="1903" height="1813" viewBox="0 0 1903 1813" fill="none"><path d="M1180 1394.9H1845.2" stroke="#e0e0e0" stroke-width="1"/><path d="M1180 1657.4H1845.2" stroke="#e0e0e0" stroke-width="1.3"/></svg>
<svg style="left:0;top:0" width="1903" height="1813" viewBox="0 0 1903 1813"><defs><linearGradient id="gb" x1="0" y1="1394.9" x2="0" y2="1657.2" gradientUnits="userSpaceOnUse"><stop offset="0" stop-color="#008ffb" stop-opacity=".24"/><stop offset=".25" stop-color="#008ffb" stop-opacity=".14"/><stop offset=".5" stop-color="#008ffb" stop-opacity=".055"/><stop offset=".68" stop-color="#008ffb" stop-opacity=".014"/><stop offset=".85" stop-color="#008ffb" stop-opacity="0"/></linearGradient></defs><path d="M1180 1657.2 L1845.2 1394.9 L1845.2 1657.2 Z" fill="url(#gb)"/><path d="M1180 1657.2 L1845.2 1394.9" fill="none" stroke="#008ffb" stroke-width="3.8" stroke-linecap="butt"/></svg>
<span class="t" style="left:1163.64px;top:1387px;font-size:11px;color:#373d3f;">2</span>
<span class="t" style="left:1163.49px;top:1649px;font-size:11px;color:#373d3f;">1</span>
<span class="t" style="left:1143.2px;top:1535.8px;font-size:11px;font-weight:700;color:#373d3f;transform:rotate(-90deg);transform-origin:0 0">Open</span>
<div class="b" style="left:1179.7px;top:1657.2px;width:1px;height:6px;background:rgba(224,224,224,.996);"></div>
<span class="t" style="left:1162.27px;top:1672px;font-size:12px;color:#373d3f;-webkit-text-stroke:0.2px #373d3f;">29 Oct</span>
<div class="b" style="left:1246.18px;top:1657.2px;width:1px;height:6px;background:rgba(224,224,224,.996);"></div>
<span class="t" style="left:1225.39px;top:1672px;font-size:12px;font-weight:700;color:#373d3f;">Nov '23</span>
<div class="b" style="left:1312.66px;top:1657.2px;width:1px;height:6px;background:rgba(224,224,224,.996);"></div>
<span class="t" style="left:1293.94px;top:1672px;font-size:12px;color:#373d3f;-webkit-text-stroke:0.2px #373d3f;">04 Nov</span>
<div class="b" style="left:1379.14px;top:1657.2px;width:1px;height:6px;background:rgba(224,224,224,.996);"></div>
<span class="t" style="left:1360.42px;top:1672px;font-size:12px;color:#373d3f;-webkit-text-stroke:0.2px #373d3f;">07 Nov</span>
<div class="b" style="left:1445.62px;top:1657.2px;width:1px;height:6px;background:rgba(224,224,224,.996);"></div>
<span class="t" style="left:1426.67px;top:1672px;font-size:12px;color:#373d3f;-webkit-text-stroke:0.2px #373d3f;">10 Nov</span>
<div class="b" style="left:1512.1px;top:1657.2px;width:1px;height:6px;background:rgba(224,224,224,.996);"></div>
<span class="t" style="left:1493.15px;top:1672px;font-size:12px;color:#373d3f;-webkit-text-stroke:0.2px #373d3f;">13 Nov</span>
<div class="b" style="left:1578.58px;top:1657.2px;width:1px;height:6px;background:rgba(224,224,224,.996);"></div>
<span class="t" style="left:1559.63px;top:1672px;font-size:12px;color:#373d3f;-webkit-text-stroke:0.2px #373d3f;">16 Nov</span>
<div class="b" style="left:1645.06px;top:1657.2px;width:1px;height:6px;background:rgba(224,224,224,.996);"></div>
<span class="t" style="left:1626.11px;top:1672px;font-size:12px;color:#373d3f;-webkit-text-stroke:0.2px #373d3f;">19 Nov</span>
<div class="b" style="left:1711.54px;top:1657.2px;width:1px;height:6px;background:rgba(224,224,224,.996);"></div>
<span class="t" style="left:1692.75px;top:1672px;font-size:12px;color:#373d3f;-webkit-text-stroke:0.2px #373d3f;">22 Nov</span>
<div class="b" style="left:1778.02px;top:1657.2px;width:1px;height:6px;background:rgba(224,224,224,.996);"></div>
<span class="t" style="left:1759.23px;top:1672px;font-size:12px;color:#373d3f;-webkit-text-stroke:0.2px #373d3f;">25 Nov</span>
<!-- floating button -->
<div class="b" style="left:1837.9px;top:238.9px;width:65.1px;height:53.2px;background:rgba(53,104,249,.996);border-radius:26.6px 6px 6px 26.6px;box-shadow:0 0 0 .6px rgba(255,255,255,.7);"></div>
<svg style="left:1859.1px;top:253.5px" width="22" height="22" viewBox="0 0 22 22" fill="none" stroke="#fff" stroke-width="2.1" stroke-linecap="round" stroke-linejoin="round"><path d="M7.75 3.15A3.25 3.25 0 0 1 14.25 3.15A3.25 3.25 0 0 1 18.85 7.75A3.25 3.25 0 0 1 18.85 14.25A3.25 3.25 0 0 1 14.25 18.85A3.25 3.25 0 0 1 7.75 18.85A3.25 3.25 0 0 1 3.15 14.25A3.25 3.25 0 0 1 3.15 7.75A3.25 3.25 0 0 1 7.75 3.15Z"/><path d="M7.2 11.2L9.7 13.7L15 7.5" stroke-width="2.2"/></svg>
<!-- sidebar -->
<div class="b" style="left:0px;top:60px;width:300px;height:895px;background:rgba(255,255,255,.996);box-shadow:0 0 10px rgba(0,0,0,.06);"></div>
<div class="b" style="left:20px;top:80px;width:260px;height:243px;background:rgba(243,244,246,.996);border-radius:10px;"></div>
<div class="b" style="left:125px;top:96px;width:50px;height:50px;background:rgba(224,229,248,.996);border-radius:9px;"></div>
<svg style="left:139px;top:109.6px" width="22.4" height="22.4" viewBox="0 0 16 16" fill="#3b66f5" stroke="#3b66f5" stroke-width=".45"><path d="M3 2.5a2.5 2.5 0 0 1 5 0 2.5 2.5 0 0 1 5 0v.006c0 .07 0 .27-.038.494H15a1 1 0 0 1 1 1v2a1 1 0 0 1-1 1v7.5a1.5 1.5 0 0 1-1.5 1.5h-11A1.5 1.5 0 0 1 1 14.5V7a1 1 0 0 1-1-1V4a1 1 0 0 1 1-1h2.038A3 3 0 0 1 3 2.506zm1.068.5H7v-.5a1.5 1.5 0 1 0-3 0c0 .085.002.274.045.43zM9 3h2.932l.023-.07c.043-.156.045-.345.045-.43a1.5 1.5 0 0 0-3 0zM1 4v2h6V4zm8 0v2h6V4zm5 3H9v8h4.5a.5.5 0 0 0 .5-.5zm-7 8V7H2v7.5a.5.5 0 0 0 .5.5z"/></svg>
<span class="t" style="left:102.77px;top:160px;font-size:24.3px;font-weight:700;transform:scaleX(1.0028);transform-origin:0 0;">Balance</span>
<span class="t" style="left:64.89px;top:207px;font-size:18.5px;letter-spacing:0.336px;-webkit-text-stroke:0.65px #10221a;transform:scaleX(1.12);transform-origin:0 0;">14,900</span>
<span class="t" style="left:176.93px;top:207px;font-size:18.5px;letter-spacing:1.221px;-webkit-text-stroke:0.65px #10221a;transform:scaleX(1.12);transform-origin:0 0;">50,000</span>
<span class="t" style="left:52.25px;top:232px;font-size:15px;letter-spacing:0.455px;color:#6f6f6f;transform:scaleX(1.12);transform-origin:0 0;">Contact left</span>
<span class="t" style="left:176.32px;top:232px;font-size:15px;letter-spacing:0.14px;color:#6f6f6f;transform:scaleX(1.12);transform-origin:0 0;">Email left</span>
<div class="b" style="left:36px;top:267px;width:228px;height:40px;background:rgba(55,98,248,.996);border-radius:20px;"></div>
<svg style="left:109.8px;top:278.6px" width="13" height="17" viewBox="0 0 13 17" fill="#fff"><path d="M8.6 .3L1 9.4H5.4L3.4 16.6L12 6.7H7.3L9.8 .6Z"/></svg>
<span class="t" style="left:125.9px;top:280px;font-size:14.9px;letter-spacing:0.25px;font-weight:700;color:#fff;transform:scaleX(1.12);transform-origin:0 0;">Upgrade</span>
<div class="b" style="left:20px;top:343px;width:255.3px;height:44px;background:rgba(232,237,253,.996);border-radius:5px;border-left:3px solid #3b66f5;"></div>
<svg style="left:37.7px;top:357px" width="16" height="16" viewBox="0 0 16 16" fill="#3b66f5"><rect x="0.3" y="0.5" width="4" height="4" rx=".8"/><rect x="6" y="0.5" width="4" height="4" rx=".8"/><rect x="11.7" y="0.5" width="4" height="4" rx=".8"/><rect x="0.3" y="6.2" width="4" height="4" rx=".8"/><rect x="6" y="6.2" width="4" height="4" rx=".8"/><rect x="11.7" y="6.2" width="4" height="4" rx=".8"/><rect x="0.3" y="11.9" width="4" height="4" rx=".8"/><rect x="6" y="11.9" width="4" height="4" rx=".8"/><rect x="11.7" y="11.9" width="4" height="4" rx=".8"/></svg>
<span class="t" style="left:62.87px;top:357px;font-size:15px;color:#3b66f5;transform:scaleX(1.0817);transform-origin:0 0;">Dashboard</span>
<svg style="left:37.7px;top:406px" width="22" height="16" viewBox="0 0 22 16" fill="none" stroke="#263830" stroke-width="1.15" stroke-linecap="round" stroke-linejoin="round"><path d="M18.2 1.4V13.8M18.2 2.6C13.5 4.6 9.4 5.2 4.4 5.2V10.4C9.4 10.4 13.5 11 18.2 13M4.4 5.2H2.4C1.4 5.2 .8 5.8 .8 6.8V8.8C.8 9.8 1.4 10.4 2.4 10.4H4.4M5.8 10.6L7.2 14.4C7.4 15 8 15.3 8.6 15.1L10.2 14.6C10.7 14.4 10.9 13.9 10.7 13.4L9.6 10.8"/></svg>
<span class="t" style="left:64.62px;top:406px;font-size:15px;letter-spacing:0.122px;transform:scaleX(1.12);transform-origin:0 0;">Marketing</span>
<div class="b" style="left:242px;top:405px;width:18px;height:18px;background:rgba(243,244,246,.996);border-radius:5px;"></div>
<svg style="left:246.5px;top:411.4px" width="9" height="6" viewBox="0 0 9 6" fill="none" stroke="#6b7772" stroke-width="1.2" stroke-linecap="round" stroke-linejoin="round"><path d="M1 1L4.5 4.6L8 1"/></svg>
<svg style="left:37.7px;top:455px" width="22" height="16" viewBox="0 0 22 16" fill="none" stroke="#263830" stroke-width="1.15" stroke-linecap="round" stroke-linejoin="round"><rect x="0.8" y="6.4" width="10.6" height="8.6" rx="1.2"/><path d="M1.2 7.8L6.1 11.6L11 7.8"/><path d="M3.6 6.2V4.2C3.6 3.5 4.1 3 4.8 3H13.2"/><path d="M6.8 2.8V1.8C6.8 1.2 7.2 .8 7.8 .8H14.6"/><path d="M11.6 13H18.4C19.1 13 19.6 12.5 19.6 11.8V5.4C19.6 4.7 19.1 4.2 18.4 4.2H11.4"/><rect x="15.4" y="6" width="2.4" height="2.6" rx=".4"/></svg>
<span class="t" style="left:67.48px;top:455px;font-size:15px;transform:scaleX(1.0595);transform-origin:0 0;">Suppressions</span>
<div class="b" style="left:242px;top:454px;width:18px;height:18px;background:rgba(243,244,246,.996);border-radius:5px;"></div>
<svg style="left:246.5px;top:460.4px" width="9" height="6" viewBox="0 0 9 6" fill="none" stroke="#6b7772" stroke-width="1.2" stroke-linecap="round" stroke-linejoin="round"><path d="M1 1L4.5 4.6L8 1"/></svg>
<svg style="left:37.7px;top:504px" width="22" height="16" viewBox="0 0 22 16" fill="none" stroke="#6d7b75" stroke-width="1.15" stroke-linecap="round" stroke-linejoin="round"><path d="M1 3H15.4M1 8H15.4M1 13H15.4" stroke-width="1.2"/></svg>
<span class="t" style="left:63.37px;top:504px;font-size:15px;transform:scaleX(1.0851);transform-origin:0 0;">Custom Template</span>
<div class="b" style="left:242px;top:503px;width:18px;height:18px;background:rgba(243,244,246,.996);border-radius:5px;"></div>
<svg style="left:246.5px;top:509.4px" width="9" height="6" viewBox="0 0 9 6" fill="none" stroke="#6b7772" stroke-width="1.2" stroke-linecap="round" stroke-linejoin="round"><path d="M1 1L4.5 4.6L8 1"/></svg>
<svg style="left:37.7px;top:553px" width="22" height="16" viewBox="0 0 22 16" fill="none" stroke="#263830" stroke-width="1.15" stroke-linecap="round" stroke-linejoin="round"><path d="M2.2 4.6A7 7 0 1 1 1.6 10"/><path d="M.8 1.8V5H4"/><path d="M8.2 4.2V8.6L11 10.2"/></svg>
<span class="t" style="left:64.47px;top:553px;font-size:15px;letter-spacing:0.071px;transform:scaleX(1.12);transform-origin:0 0;">Activity</span>
<svg style="left:37.7px;top:602px" width="22" height="16" viewBox="0 0 22 16" fill="none" stroke="#263830" stroke-width="1.15" stroke-linecap="round" stroke-linejoin="round"><path d="M5.4 4.2L6.8 1.9C7.4 .9 8.8 .9 9.4 1.9L10.8 4.2"/><path d="M8.6 4.6L11 4.8L11.6 2.4"/><path d="M13.2 7.4L15 10.4C15.6 11.4 14.9 12.8 13.7 12.8H10.6"/><path d="M12.4 10.8L10.4 12.8L12.4 14.8"/><path d="M6.4 12.8H2.5C1.3 12.8 .6 11.4 1.2 10.4L2.6 8"/><path d="M.7 8.7L2.8 7.4L4 9.6"/></svg>
<span class="t" style="left:63.46px;top:602px;font-size:15px;transform:scaleX(1.0873);transform-origin:0 0;">Subscription List</span>
<svg style="left:37.7px;top:651px" width="22" height="16" viewBox="0 0 22 16" fill="none" stroke="#263830" stroke-width="1.15" stroke-linecap="round" stroke-linejoin="round"><circle cx="7.2" cy="5.4" r="3.4"/><path d="M2.6 6.4V4.8A4.6 4.6 0 0 1 11.8 4.8V6.6C11.8 8.4 10.6 9 8.4 9"/><path d="M.8 15V13.6C.8 12 2.4 10.8 4.4 10.8H10C12 10.8 13.6 12 13.6 13.6V15Z"/></svg>
<span class="t" style="left:61.24px;top:651px;font-size:15px;letter-spacing:0.007px;transform:scaleX(1.12);transform-origin:0 0;">Support Ticket</span>
<svg style="left:37.7px;top:700px" width="22" height="16" viewBox="0 0 22 16" fill="none" stroke="#263830" stroke-width="1.15" stroke-linecap="round" stroke-linejoin="round"><rect x=".8" y="2.6" width="17" height="11" rx="1.3"/><path d="M3.4 7H8.2M3.4 10.2H5.4M7.2 10.2H9.2"/><rect x="11.4" y="5.4" width="3.8" height="3" rx=".5"/></svg>
<span class="t" style="left:64.69px;top:700px;font-size:15px;transform:scaleX(1.062);transform-origin:0 0;">Payment Request</span>
<svg style="left:37.7px;top:749px" width="22" height="16" viewBox="0 0 22 16" fill="none" stroke="#263830" stroke-width="1.15" stroke-linecap="round" stroke-linejoin="round"><path d="M.8 .8V15.2H15.6"/><path d="M3.6 10.6L7 6.8L10 9L14.8 4.2" stroke-width="1.2"/></svg>
<span class="t" style="left:63.84px;top:749px;font-size:15px;transform:scaleX(1.064);transform-origin:0 0;">Transaction</span>
<svg style="left:37.7px;top:798px" width="22" height="16" viewBox="0 0 22 16" fill="none" stroke="#263830" stroke-width="1.15" stroke-linecap="round" stroke-linejoin="round"><circle cx="10.4" cy="5.6" r="2.7"/><path d="M5.2 15.2C5.2 12 7.4 10.4 10.4 10.4C13.4 10.4 15.6 12 15.6 15.2Z"/><circle cx="3.8" cy="3.8" r="1.9"/><path d="M.8 10.6C.8 8.4 2 7.4 4.4 7.4"/><circle cx="17" cy="3.8" r="1.9"/><path d="M20 10.6C20 8.4 18.8 7.4 16.4 7.4"/></svg>
<span class="t" style="left:68.87px;top:798px;font-size:15px;transform:scaleX(1.0817);transform-origin:0 0;">Api Recipients</span>
<svg style="left:37.7px;top:847px" width="22" height="16" viewBox="0 0 22 16" fill="none" stroke="#263830" stroke-width="1.15" stroke-linecap="round" stroke-linejoin="round"><rect x="7.4" y=".8" width="7.8" height="7.8" rx="2.2"/><rect x="10.6" y="3.4" width="2.2" height="2.2" rx=".5"/><path d="M8 8L.9 15.1H3.2V13.4H4.8V11.8H6"/></svg>
<span class="t" style="left:64.47px;top:847px;font-size:15px;transform:scaleX(1.1019);transform-origin:0 0;">Api Key</span>
<!-- header -->
<div class="b" style="left:0px;top:0px;width:1903px;height:60px;background:rgba(255,255,255,.996);box-shadow:0 2px 7px rgba(0,0,0,.06);"></div>
<svg style="left:18px;top:16px" width="104" height="30" viewBox="18 16 104 30">
<defs><linearGradient id="lg" x1="0" y1="0" x2="1" y2="1"><stop offset="0" stop-color="#2a1f9e"/><stop offset="1" stop-color="#3a1a78"/></linearGradient></defs>
<polygon points="20.6,19.6 31.2,28.6 25.6,29.6 26.8,32 25.2,32.4 24.2,30.4 20.2,33.8" fill="url(#lg)"/><path d="M21.2 21L25 29.8M21 22.5L23.6 30.6" stroke="#8f88d2" stroke-width=".5" fill="none"/>
<circle cx="26.4" cy="36.6" r="0.9" fill="#2a1f9e"/><circle cx="30.4" cy="33.6" r="0.9" fill="#2a1f9e"/><circle cx="24" cy="35" r="0.5" fill="#8d86c9"/>
<path d="M27.6,34.7 C37,41.8 55,41 60.6,35 C53,39 39,39.4 27.6,34.7Z" fill="#2a1f9e"/>
<path d="M28.5,37.4 C42,45.8 65,44 73.8,34.6 L67.5,35 C60,41.2 43,42 28.5,37.4Z" fill="url(#lg)"/>
<text x="33.1" y="34.1" font-family="Liberation Sans" font-weight="700" font-size="17" fill="#2b1c8f" stroke="#2b1c8f" stroke-width=".55" stroke-linejoin="round" textLength="85.5" lengthAdjust="spacingAndGlyphs">Swift Send</text>
</svg>
<svg style="left:308px;top:16px" width="32" height="28" viewBox="308 16 32 28" fill="none" stroke="#10221a">
<rect x="311.05" y="19.15" width="3.2" height="3.2" rx=".9" stroke-width="1.9"/>
<rect x="311.05" y="27.85" width="3.2" height="3.2" rx=".9" stroke-width="1.9"/>
<rect x="311.05" y="36.65" width="3.2" height="3.2" rx=".9" stroke-width="1.9"/>
<path d="M319.8 20.6H337M319.8 29.4H337M319.8 38.2H337" stroke-width="2" stroke-linecap="round"/></svg>
<div class="b" style="left:358px;top:10px;width:360px;height:40px;background:rgba(243,244,246,.996);border-radius:5px;"></div>
<span class="t" style="left:368.85px;top:22px;font-size:17.9px;color:#626d79;transform:scaleX(1.0467);transform-origin:0 0;">Search</span>
<svg style="left:686px;top:20px" width="20" height="20" viewBox="686 20 20 20" fill="none" stroke="#10221a" stroke-width="1.8" stroke-linecap="round"><circle cx="694.4" cy="28.7" r="5.6"/><path d="M698.6 32.9L703.2 37.4"/></svg>
<svg style="left:1753px;top:12px" width="36" height="36" viewBox="0 0 36 36">
<defs><clipPath id="av"><circle cx="18" cy="18" r="18"/></clipPath><filter id="avb" x="-10%" y="-10%" width="120%" height="120%"><feGaussianBlur stdDeviation=".55"/></filter>
<linearGradient id="hg" x1="0" y1="0" x2="1" y2="0"><stop offset="0" stop-color="#8a5236"/><stop offset=".3" stop-color="#6a3a24"/><stop offset=".7" stop-color="#633522"/><stop offset="1" stop-color="#875038"/></linearGradient></defs>
<g clip-path="url(#av)"><rect width="36" height="36" fill="#eeedeb"/>
<g filter="url(#avb)">
<path d="M17.9 .3C21 .3 23.6 2 25 5C26.6 8.5 27.8 13 28.4 17C29 21.5 29.8 25.5 31 29.2L24.5 36H10.2L4.6 29.4C6 25.5 7.2 21 7.9 16.5C8.6 12 9.5 8 11.5 5C13 2 15 .3 17.9 .3Z" fill="url(#hg)"/>
<path d="M13.8 22H22.4V28C23.5 30 24 31.5 24.2 33.2L18 34L11.6 33.2C11.9 31.5 12.6 30 13.8 28Z" fill="#e6c0aa"/>
<path d="M10.5 33.2C13 32.3 23 32.3 25.6 33.2L26.5 37H9.5Z" fill="#fbfaf9"/>
<ellipse cx="17.9" cy="14.6" rx="6.7" ry="8.5" fill="#ecccb8"/>
<path d="M11 12C11.5 7.5 14 5.2 17.5 5C20.5 4.8 23.5 6 24.6 9.5C25 11 25.1 12.5 25 14C24 11.5 22.5 9 20.8 7.2C18.5 8.5 14.5 9 12.6 9.4C11.8 10.5 11.3 11.5 11 13Z" fill="#5d321f"/>
<ellipse cx="14.9" cy="12.2" rx="1.3" ry=".7" fill="#6b4636"/><ellipse cx="21.5" cy="12" rx="1.3" ry=".7" fill="#6b4636"/>
<path d="M15.4 18.2C17 19 20 19 21.8 18C21 20.6 16.3 20.8 15.4 18.2Z" fill="#d4806e"/>
<path d="M16.2 18.6C17.5 19.1 19.8 19.1 21 18.5C20.3 19.5 17 19.6 16.2 18.6Z" fill="#fff"/>
</g></g></svg>
<span class="t" style="left:1797.75px;top:24px;font-size:13.1px;letter-spacing:0.106px;-webkit-text-stroke:0.45px #10221a;transform:scaleX(1.12);transform-origin:0 0;">Demo User</span>
<div class="b" style="left:1877.2px;top:27.4px;border-left:4.1px solid transparent;border-right:4.1px solid transparent;border-top:4.1px solid #10221a;width:0;height:0"></div>
<!-- footer -->
<span class="t" style="left:1581.97px;top:1776px;font-size:13.5px;letter-spacing:0.276px;transform:scaleX(1.12);transform-origin:0 0;">© Copyright</span>
<span class="t" style="left:1670.59px;top:1776px;font-size:13.5px;font-weight:700;transform:scaleX(1.0542);transform-origin:0 0;">Swift Send</span>
<span class="t" style="left:1742.27px;top:1776px;font-size:13.5px;">.</span>
<span class="t" style="left:1751.97px;top:1776px;font-size:13.5px;transform:scaleX(1.1075);transform-origin:0 0;">All Rights Reserved</span>
</div></body></html>
